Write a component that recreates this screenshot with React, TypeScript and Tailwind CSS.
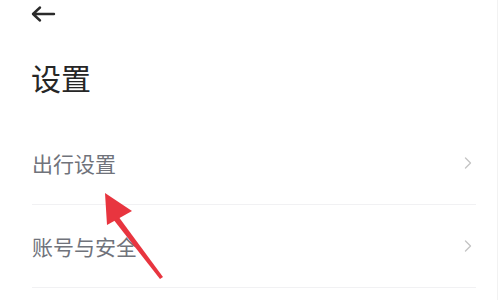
import { ChevronRight } from "lucide-react"

const items = ["出行设置", "账号与安全"]

export default function App() {
  return (
    <div
      className="relative w-[500px] h-[300px] overflow-hidden bg-white"
      style={{ fontFamily: '"Noto Sans CJK SC", "Noto Sans", sans-serif' }}
    >
      <div className="absolute right-[2px] top-0 h-full w-px bg-[#f2f2f2]" />

      {/* Header */}
      <div className="h-[26px] pl-[30px] pt-[5px]">
        <svg width="26" height="18" viewBox="0 0 26 18" fill="none">
          <path
            d="M24 9H3M10 2.5L3 9l7 6.5"
            stroke="#2a2a2a"
            strokeWidth="2.4"
            strokeLinecap="round"
            strokeLinejoin="round"
          />
        </svg>
      </div>

      <h1 className="mt-[35px] pl-[31px] text-[30px] leading-[32px] font-normal text-[#262626]">设置</h1>

      {/* List */}
      <div className="mt-[29px] ml-[32px] mr-[24px]">
        {items.map((label) => (
          <div
            key={label}
            className="flex h-[83px] items-center justify-between border-b border-[#f1f1f3]"
          >
            <span className="text-[21px] leading-none text-[#70737b]">{label}</span>
            <ChevronRight className="mr-[-2px] h-[20px] w-[20px] text-[#c4c4c4]" strokeWidth={1.6} />
          </div>
        ))}
      </div>

      {/* Annotation arrow */}
      <svg className="pointer-events-none absolute inset-0" width="500" height="300" viewBox="0 0 500 300">
        <path d="M160 279 L163 277 L118 216 L113 219 Z" fill="#e8353f" />
        <polygon points="105,193 107,225 132,211" fill="#e8353f" />
      </svg>
    </div>
  )
}
